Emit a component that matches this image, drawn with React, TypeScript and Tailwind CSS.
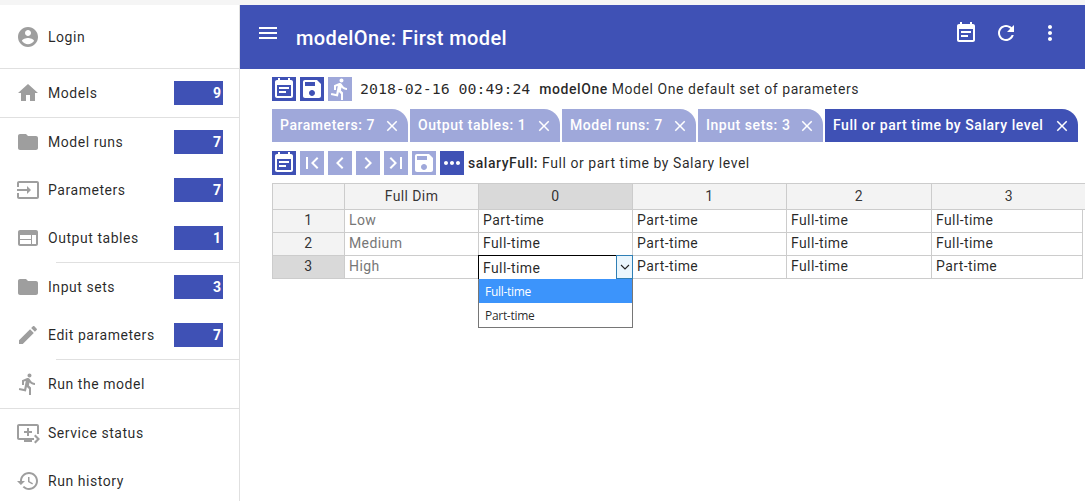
import type { ReactNode } from 'react'

const icons = {
  account: 'M12 2C6.48 2 2 6.48 2 12s4.48 10 10 10 10-4.48 10-10S17.52 2 12 2zm0 3c1.66 0 3 1.34 3 3s-1.34 3-3 3-3-1.34-3-3 1.34-3 3-3zm0 14.2c-2.5 0-4.71-1.28-6-3.22.03-1.99 4-3.08 6-3.08 1.99 0 5.97 1.09 6 3.08-1.29 1.94-3.5 3.22-6 3.22z',
  home: 'M10 20v-6h4v6h5v-8h3L12 3 2 12h3v8z',
  folder: 'M10 4H4c-1.1 0-1.99.9-1.99 2L2 18c0 1.1.9 2 2 2h16c1.1 0 2-.9 2-2V8c0-1.1-.9-2-2-2h-8l-2-2z',
  input: 'M21 3.01H3c-1.1 0-2 .9-2 2V9h2V4.99h18v14.03H3V15H1v4.01c0 1.1.9 1.98 2 1.98h18c1.1 0 2-.88 2-1.98v-14c0-1.11-.9-2-2-2zM11 16l4-4-4-4v3H1v2h10v3z',
  web: 'M20 4H4c-1.1 0-1.99.9-1.99 2L2 18c0 1.1.9 2 2 2h16c1.1 0 2-.9 2-2V6c0-1.1-.9-2-2-2zm-5 14H4v-4h11v4zm0-5H4V9h11v4zm5 5h-4V9h4v9z',
  edit: 'M3 17.25V21h3.75L17.81 9.94l-3.75-3.75L3 17.25zM20.71 7.04c.39-.39.39-1.02 0-1.41l-2.34-2.34c-.39-.39-1.02-.39-1.41 0l-1.83 1.83 3.75 3.75 1.83-1.83z',
  run: 'M13.49 5.48c1.1 0 2-.9 2-2s-.9-2-2-2-2 .9-2 2 .9 2 2 2zm-3.6 13.9l1-4.4 2.1 2v6h2v-7.5l-2.1-2 .6-3c1.3 1.5 3.3 2.5 5.5 2.5v-2c-1.9 0-3.5-1-4.3-2.4l-1-1.6c-.4-.6-1-1-1.7-1-.3 0-.5.1-.8.1l-5.2 2.2v4.7h2v-3.4l1.8-.7-1.6 8.1-4.9-1-.4 2 7 1.4z',
  queue: 'M21 3H3c-1.11 0-2 .89-2 2v12c0 1.1.89 2 2 2h5v2h8v-2h2v-2H3V5h18v8h2V5c0-1.11-.9-2-2-2zm-8 7V7h-2v3H8v2h3v3h2v-3h3v-2h-3zm11 8l-4.5 4.5L18 21l3-3-3-3 1.5-1.5L24 18z',
  history: 'M13 3c-4.97 0-9 4.03-9 9H1l3.89 3.89.07.14L9 12H6c0-3.87 3.13-7 7-7s7 3.13 7 7-3.13 7-7 7c-1.93 0-3.68-.79-4.94-2.06l-1.42 1.42C8.27 19.99 10.51 21 13 21c4.97 0 9-4.03 9-9s-4.03-9-9-9zm-1 5v5l4.28 2.54.72-1.21-3.5-2.08V8H12z',
  note: 'M17 10H7v2h10v-2zm2-7h-1V1h-2v2H8V1H6v2H5c-1.11 0-1.99.9-1.99 2L3 19c0 1.1.89 2 2 2h14c1.1 0 2-.9 2-2V5c0-1.1-.9-2-2-2zm0 16H5V8h14v11zm-5-5H7v2h7v-2z',
  save: 'M17 3H5c-1.11 0-2 .9-2 2v14c0 1.1.89 2 2 2h14c1.1 0 2-.9 2-2V7l-4-4zm-5 16c-1.66 0-3-1.34-3-3s1.34-3 3-3 3 1.34 3 3-1.34 3-3 3zm3-10H5V5h10v4z',
  refresh: 'M17.65 6.35C16.2 4.9 14.21 4 12 4c-4.42 0-7.99 3.58-7.99 8s3.57 8 7.99 8c3.73 0 6.84-2.55 7.73-6h-2.08c-.82 2.33-3.04 4-5.65 4-3.31 0-6-2.69-6-6s2.69-6 6-6c1.66 0 3.14.69 4.22 1.78L13 11h7V4l-2.35 2.35z',
  moreVert: 'M12 8c1.1 0 2-.9 2-2s-.9-2-2-2-2 .9-2 2 .9 2 2 2zm0 2c-1.1 0-2 .9-2 2s.9 2 2 2 2-.9 2-2-.9-2-2-2zm0 6c-1.1 0-2 .9-2 2s.9 2 2 2 2-.9 2-2-.9-2-2-2z',
  moreHoriz: 'M6 10c-1.1 0-2 .9-2 2s.9 2 2 2 2-.9 2-2-.9-2-2-2zm12 0c-1.1 0-2 .9-2 2s.9 2 2 2 2-.9 2-2-.9-2-2-2zm-6 0c-1.1 0-2 .9-2 2s.9 2 2 2 2-.9 2-2-.9-2-2-2z',
  menu: 'M3 18h18v-2H3v2zm0-5h18v-2H3v2zm0-7v2h18V6H3z',
  first: 'M18.41 16.59L13.82 12l4.59-4.59L17 6l-6 6 6 6zM6 6h2v12H6z',
  last: 'M5.59 7.41L10.18 12l-4.59 4.59L7 18l6-6-6-6zM16 6h2v12h-2z',
  left: 'M15.41 7.41L14 6l-6 6 6 6 1.41-1.41L10.83 12z',
  right: 'M10 6L8.59 7.41 13.17 12l-4.58 4.59L10 18l6-6z',
  close: 'M19 6.41L17.59 5 12 10.59 6.41 5 5 6.41 10.59 12 5 17.59 6.41 19 12 13.41 17.59 19 19 17.59 13.41 12z',
}

type IconName = keyof typeof icons

function Icon({ name, className = 'w-6 h-6' }: { name: IconName; className?: string }) {
  return (
    <svg viewBox="0 0 24 24" className={`fill-current shrink-0 ${className}`}>
      <path d={icons[name]} />
    </svg>
  )
}

function NavItem({ icon, label, count }: { icon: IconName; label: string; count?: number }) {
  return (
    <div className="flex items-center shrink-0 h-12 pl-4 pr-4 text-[14px] tracking-[0.55px] text-black/85">
      <Icon name={icon} className="w-6 h-6 text-[#9e9e9e]" />
      <span className="ml-2 flex-1">{label}</span>
      {count !== undefined && (
        <span className="w-[49px] h-6 bg-[#3f51b5] text-white font-bold text-right pr-[2px] leading-6 tracking-normal">
          {count}
        </span>
      )}
    </div>
  )
}

function Sidebar() {
  return (
    <aside className="w-[240px] shrink-0 border-r border-[#e0e0e0] bg-white flex flex-col overflow-hidden">
      <div className="shrink-0 pt-2 pb-[7px] border-b border-[#e0e0e0]">
        <NavItem icon="account" label="Login" />
      </div>
      <div className="shrink-0 border-b border-[#e0e0e0]">
        <NavItem icon="home" label="Models" count={9} />
      </div>
      <NavItem icon="folder" label="Model runs" count={7} />
      <NavItem icon="input" label="Parameters" count={7} />
      <NavItem icon="web" label="Output tables" count={1} />
      <div className="shrink-0 ml-14 border-t border-[#e0e0e0]" />
      <NavItem icon="folder" label="Input sets" count={3} />
      <NavItem icon="edit" label="Edit parameters" count={7} />
      <div className="shrink-0 ml-14 border-t border-[#e0e0e0]" />
      <NavItem icon="run" label="Run the model" />
      <div className="shrink-0 border-t border-[#e0e0e0]" />
      <NavItem icon="queue" label="Service status" />
      <NavItem icon="history" label="Run history" />
    </aside>
  )
}

function ToolButton({ icon, light }: { icon: IconName; light?: boolean }) {
  return (
    <span className={`w-6 h-6 flex items-center justify-center text-white ${light ? 'bg-[#9fa8da]' : 'bg-[#3f51b5]'}`}>
      <Icon name={icon} />
    </span>
  )
}

function Tab({ label, active, className }: { label: string; active?: boolean; className: string }) {
  return (
    <div className={`h-[33px] flex items-center justify-between pl-2 pr-[7px] rounded-tr-[16px] text-white text-[14px] font-medium tracking-[0.55px] ${className} ${active ? 'bg-[#3f51b5]' : 'bg-[#9fa8da]'}`}>
      <span className="whitespace-nowrap">{label}</span>
      <Icon name="close" className="w-[18px] h-[18px]" />
    </div>
  )
}

const rows = [
  { n: 1, dim: 'Low', cells: ['Part-time', 'Part-time', 'Full-time', 'Full-time'] },
  { n: 2, dim: 'Medium', cells: ['Full-time', 'Part-time', 'Full-time', 'Full-time'] },
  { n: 3, dim: 'High', cells: ['Full-time', 'Part-time', 'Full-time', 'Part-time'] },
]

function Th({ children, className = '', colSpan }: { children?: ReactNode; className?: string; colSpan?: number }) {
  return (
    <th colSpan={colSpan} className={`border border-[#ccc] font-normal text-center text-black/80 ${className}`}>
      {children}
    </th>
  )
}

function Grid() {
  return (
    <div className="relative mt-2 text-[14px] tracking-[0.4px]">
      <table className="border-collapse table-fixed w-[814px]">
        <colgroup>
          <col className="w-[72px]" />
          <col className="w-[134px]" />
          <col className="w-[154px]" />
          <col className="w-[154px]" />
          <col className="w-[145px]" />
          <col className="w-[151px]" />
          <col className="w-[4px]" />
        </colgroup>
        <thead>
          <tr className="h-[26px]">
            <Th className="bg-[#f3f3f3]" />
            <Th className="bg-[#f3f3f3]">Full Dim</Th>
            <Th className="bg-[#d9d9d9]">0</Th>
            <Th className="bg-[#f3f3f3]">1</Th>
            <Th className="bg-[#f3f3f3]">2</Th>
            <Th className="bg-[#f3f3f3]" colSpan={2}>3</Th>
          </tr>
        </thead>
        <tbody>
          {rows.map((row) => (
            <tr key={row.n} className="h-[23px]">
              <Th className={`leading-[18px] pb-[2px] ${row.n === 3 ? 'bg-[#d9d9d9]' : 'bg-[#f3f3f3]'}`}>{row.n}</Th>
              <td className="border border-[#ccc] px-1 leading-[18px] pb-[2px] text-[#777]">{row.dim}</td>
              {row.cells.map((cell, i) => (
                <td key={i} className="border border-[#ccc] px-1 leading-[18px] pb-[2px] text-black/85">
                  {row.n === 3 && i === 0 ? '' : cell}
                </td>
              ))}
              <td />
            </tr>
          ))}
        </tbody>
      </table>

      {/* open cell editor with its dropdown */}
      <div className="absolute left-[206px] top-[72px] w-[155px] z-10 bg-white">
        <div className="h-[24px] border border-black border-b-0 flex items-center pl-1 text-black/85 relative">
          <span className="pt-[1px]">Full-time</span>
          <span className="absolute -right-px -top-px w-[17px] h-[24px] border border-[#2f7fb5] bg-[#eaf6fd] flex items-center justify-center text-[#222]">
            <svg viewBox="0 0 10 6" className="w-[10px] h-[6px] fill-none stroke-current stroke-[1.1]">
              <path d="M1 1l4 4 4-4" />
            </svg>
          </span>
        </div>
        <div className="border border-[#767676] border-t-0 text-[12px] tracking-[-0.3px]" style={{ fontFamily: '"Open Sans", sans-serif' }}>
          <div className="h-6 bg-[#3c94fb] text-white pl-[6px] pt-[1px] leading-6">Full-time</div>
          <div className="h-6 text-black/85 pl-[6px] pt-[1px] leading-6">Part-time</div>
        </div>
      </div>
    </div>
  )
}

export default function App() {
  return (
    <div className="w-[1085px] h-[501px] overflow-hidden bg-white flex flex-col" style={{ fontFamily: 'Roboto, sans-serif' }}>
      <div className="h-[5px] bg-[#f5f5f5] shrink-0" />
      <div className="flex flex-1 min-h-0">
        <Sidebar />
        <main className="flex-1 min-w-0 flex flex-col overflow-hidden">
          <header className="h-16 shrink-0 bg-[#3f51b5] text-white flex items-center pl-4 pr-[23px]">
            <Icon name="menu" className="w-6 h-6 -mt-2" />
            <h1 className="ml-4 pt-[2px] text-[20px] font-medium tracking-[0.4px] flex-1">modelOne: First model</h1>
            <div className="flex items-center -mt-[8px]">
              <Icon name="note" />
              <Icon name="refresh" className="w-6 h-6 ml-4" />
              <Icon name="moreVert" className="w-6 h-6 ml-5" />
            </div>
          </header>
          <div className="pl-8 pt-2">
            <div className="flex items-center gap-1 h-6">
              <ToolButton icon="note" />
              <ToolButton icon="save" />
              <ToolButton icon="run" light />
              <span className="ml-1 text-[14.9px] text-black/85" style={{ fontFamily: '"DejaVu Sans Mono", monospace' }}>
                2018-02-16 00:49:24
              </span>
              <span className="ml-[5px] text-[14px] tracking-[0.55px] text-black/85">
                <b className="font-medium">modelOne</b> Model One default set of parameters
              </span>
            </div>
            <div className="flex gap-[2px] mt-2">
              <Tab label="Parameters: 7" className="w-[136px]" />
              <Tab label="Output tables: 1" className="w-[150px]" />
              <Tab label="Model runs: 7" className="w-[134px]" />
              <Tab label="Input sets: 3" className="w-[125px]" />
              <Tab label="Full or part time by Salary level" className="w-[253px]" active />
            </div>
            <div className="flex items-center gap-1 h-6 mt-[9px]">
              <ToolButton icon="note" />
              <ToolButton icon="first" light />
              <ToolButton icon="left" light />
              <ToolButton icon="right" light />
              <ToolButton icon="last" light />
              <ToolButton icon="save" light />
              <ToolButton icon="moreHoriz" />
              <span className="text-[14px] tracking-[0.55px] text-black/85">
                <b className="font-medium">salaryFull:</b> Full or part time by Salary level
              </span>
            </div>
            <Grid />
          </div>
        </main>
      </div>
    </div>
  )
}
